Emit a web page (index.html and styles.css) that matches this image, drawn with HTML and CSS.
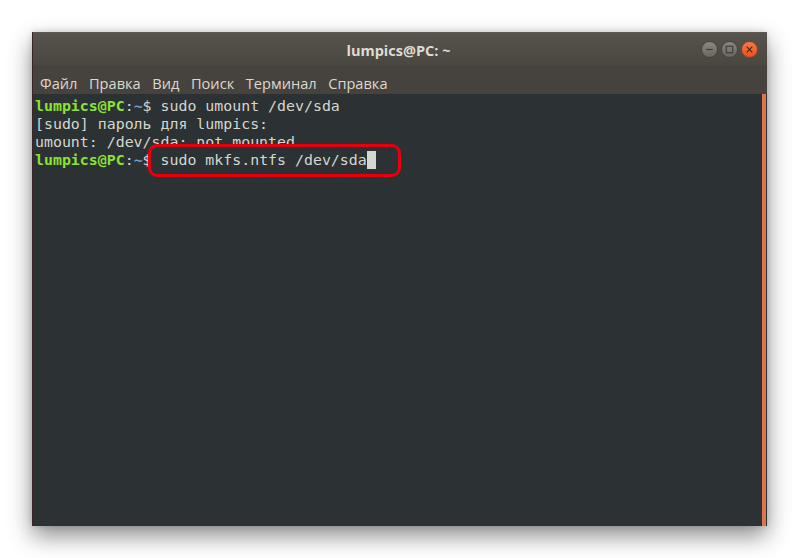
FILE: index.html
```html
<!DOCTYPE html>
<html lang="ru">
<head>
  <meta charset="UTF-8">
  <title>lumpics@PC: ~</title>
  <link rel="stylesheet" href="styles.css">
</head>
<body>
  <div class="window">
    <!-- title bar -->
    <header class="titlebar">
      <span class="title">lumpics@PC: ~</span>
      <div class="controls">
        <span class="btn min"><svg viewBox="0 0 16 16"><path d="M4.5 8h7" /></svg></span>
        <span class="btn max"><svg viewBox="0 0 16 16"><rect x="4.5" y="4.5" width="7" height="7" /></svg></span>
        <span class="btn close"><svg viewBox="0 0 16 16"><path d="M5 5l6 6M11 5l-6 6" /></svg></span>
      </div>
    </header>

    <!-- menu -->
    <nav class="menubar">
      <span>Файл</span>
      <span>Правка</span>
      <span>Вид</span>
      <span>Поиск</span>
      <span>Терминал</span>
      <span>Справка</span>
    </nav>

    <!-- terminal -->
    <div class="terminal">
      <pre class="screen"><span class="user">lumpics@PC</span>:<span class="path">~</span>$ sudo umount /dev/sda
[sudo] пароль для lumpics:
umount: /dev/sda: not mounted.
<span class="user">lumpics@PC</span>:<span class="path">~</span>$ <span class="mark">sudo mkfs.ntfs /dev/sda<span class="cursor"> </span></span></pre>
      <div class="scrollbar"></div>
    </div>
  </div>
</body>
</html>
```

FILE: styles.css
```css
/* page */
html, body {
    margin: 0;
    padding: 0;
    background: #ffffff;
}

body {
    padding: 32px 0 0 32px;
    height: 558px;
    box-sizing: border-box;
    overflow: hidden;
}

/* window frame */
.window {
    width: 735px;
    height: 494px;
    display: flex;
    flex-direction: column;
    border-left: 1px solid #3a2428;
    box-sizing: border-box;
    box-shadow: 0 10px 22px rgba(0, 0, 0, 0.45), 0 0 6px rgba(0, 0, 0, 0.15);
    background: #2c3133;
}

.titlebar {
    height: 33px;
    display: flex;
    align-items: center;
    justify-content: center;
    position: relative;
    background: linear-gradient(#57534c, #4a4741);
    border-top: 1px solid #5e5a53;
    box-sizing: border-box;
}

.title {
    font-family: "Open Sans", "DejaVu Sans", sans-serif;
    font-weight: bold;
    font-size: 14.5px;
    color: #dfdbd2;
    margin-left: -3px;
    padding-top: 2px;
}

.controls {
    position: absolute;
    right: 9px;
    top: 8px;
    display: flex;
    gap: 3px;
}

.btn {
    width: 17px;
    height: 17px;
    border-radius: 50%;
    background: linear-gradient(#8a8780, #6a6761);
    border: 1px solid #45423d;
    box-sizing: border-box;
    display: flex;
    align-items: center;
    justify-content: center;
}

.btn svg {
    width: 15px;
    height: 15px;
    fill: none;
    stroke: #3c3a36;
    stroke-width: 1.2;
}

.btn.close {
    background: linear-gradient(#f47a4c, #e2541f);
    border-color: #9c3a16;
}

.btn.close svg {
    stroke: #5a1e08;
}

/* menu */
.menubar {
    height: 29px;
    display: flex;
    align-items: center;
    gap: 11.6px;
    padding: 7px 0 0 7px;
    box-sizing: border-box;
    background: #46433e;
    font-family: "Open Sans", "DejaVu Sans", sans-serif;
    font-size: 14.6px;
    color: #dcd8cf;
}

/* terminal area */
.terminal {
    flex: 1;
    display: flex;
    background: #2c3133;
}

.screen {
    flex: 1;
    margin: 0;
    padding: 3px 0 0 2px;
    font-family: "DejaVu Sans Mono", monospace;
    font-size: 14.9px;
    line-height: 18px;
    color: #d3d7cf;
}

.user {
    color: #8ae234;
    font-weight: bold;
}

.path {
    color: #729fcf;
    font-weight: bold;
}

.mark {
    position: relative;
}

.mark::after {
    content: "";
    position: absolute;
    left: -13px;
    right: -25px;
    top: -7px;
    bottom: -8px;
    border: 3px solid #e4000d;
    border-radius: 9px;
}

.cursor {
    background: #d3d7cf;
}

.scrollbar {
    width: 4px;
    margin-right: 1px;
    background: #e0744a;
}
```
